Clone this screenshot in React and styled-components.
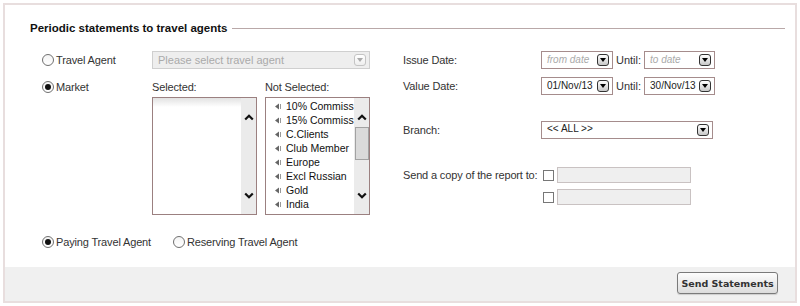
import React from 'react';
import styled, { createGlobalStyle, css } from 'styled-components';

const Global = createGlobalStyle`
  html, body { margin: 0; padding: 0; background: #fff; }
  body {
    font-family: "Liberation Sans", Arial, sans-serif;
    font-size: 11px;
    color: #333;
  }
  #root { padding: 3px; }
`;

const Panel = styled.section`
  box-sizing: border-box;
  width: 794px;
  height: 300px;
  border: 2px solid #e8dede;
  display: flex;
  flex-direction: column;
`;

const Header = styled.div`
  display: flex;
  align-items: center;
  gap: 5px;
  padding: 16px 10px 0 25px;
  height: 14px;
  line-height: 14px;
`;

const Title = styled.h2`
  margin: 0;
  font-size: 11.5px;
  font-weight: bold;
  color: #111;
  white-space: nowrap;
`;

const Rule = styled.div`
  flex: 1;
  height: 1px;
  background: #b9a8a8;
`;

const Main = styled.div`
  display: flex;
  gap: 33px;
  padding-left: 37px;
  margin-top: 16px;
`;

const LeftCol = styled.div`
  display: flex;
  flex-direction: column;
  width: 328px;
`;

const TopRow = styled.div`
  display: flex;
  align-items: center;
  height: 18px;
`;

const RadioCell = styled.div`
  width: 110px;
  flex-shrink: 0;
  align-self: ${(p) => (p.$top ? 'flex-start' : 'center')};
`;

const RadioLabel = styled.label`
  display: inline-flex;
  align-items: center;
  gap: 2px;
  line-height: 14px;
  color: #333;
  white-space: nowrap;
  letter-spacing: -0.15px;
`;

const RadioDot = styled.span`
  box-sizing: border-box;
  width: 12px;
  height: 12px;
  border-radius: 50%;
  border: 1px solid #707070;
  background: linear-gradient(#f4f4f4, #fff);
  display: inline-flex;
  align-items: center;
  justify-content: center;
  &::after {
    content: '';
    width: 6px;
    height: 6px;
    border-radius: 50%;
    background: ${(p) => (p.$checked ? '#111' : 'transparent')};
  }
`;

const SelectBox = styled.div`
  box-sizing: border-box;
  width: ${(p) => p.$w}px;
  height: 18px;
  display: flex;
  justify-content: space-between;
  align-items: ${(p) => (p.$topText ? 'flex-start' : 'center')};
  padding: 0 3px 0 5px;
  ${(p) =>
    p.$disabled
      ? css`
          border: 1px solid #cfcfcf;
          background: #eee;
          color: #aaa;
        `
      : css`
          border: 1px solid #a58c8c;
          background: #fff;
          color: #222;
        `}
`;

const SelectText = styled.span`
  font-size: ${(p) => (p.$small ? '10px' : '11px')};
  line-height: 14px;
  white-space: nowrap;
`;

const DropBtnWrap = styled.span`
  align-self: center;
  box-sizing: border-box;
  width: 12px;
  height: 12px;
  border-radius: 3px;
  border: 1px solid ${(p) => (p.$disabled ? '#c4c4c4' : '#333')};
  background: linear-gradient(#fff, ${(p) => (p.$disabled ? '#eee' : '#c8c8c8')});
  display: inline-flex;
  align-items: center;
  justify-content: center;
  flex-shrink: 0;
`;

const DropBtn = ({ disabled }) => (
  <DropBtnWrap $disabled={disabled}>
    <svg width="6" height="4" viewBox="0 0 6 4">
      <polygon points="0,0 6,0 3,4" fill={disabled ? '#aaa' : '#000'} />
    </svg>
  </DropBtnWrap>
);

const ListsRow = styled.div`
  display: flex;
  margin-top: 11px;
`;

const ListColumn = styled.div`
  width: 105px;
  display: flex;
  flex-direction: column;
  margin-right: ${(p) => (p.$gap ? '8px' : '0')};
`;

const ListLabel = styled.div`
  line-height: 14px;
  height: 14px;
  margin-bottom: 3px;
  color: #333;
  letter-spacing: -0.15px;
`;

const ListBox = styled.div`
  box-sizing: border-box;
  height: 118px;
  border: 1px solid #9b8080;
  display: flex;
`;

const Items = styled.ul`
  flex: 1;
  min-width: 0;
  margin: 0;
  padding: 1px 0 0 9px;
  list-style: none;
  overflow: hidden;
  background: ${(p) =>
    p.$shade ? 'linear-gradient(#e2e2e2 0px, #fff 9px, #fff 100%)' : '#fff'};
`;

const Item = styled.li`
  display: flex;
  align-items: center;
  gap: 4px;
  height: 14px;
  line-height: 14px;
  font-size: 10.5px;
  color: #111;
  white-space: nowrap;
  svg { flex-shrink: 0; }
`;

const ItemIcon = () => (
  <svg width="7" height="7" viewBox="0 0 7 7">
    <polygon points="0,3.5 4,0.5 4,6.5" fill="#666" />
    <rect x="5" y="1" width="1" height="5" fill="#999" />
  </svg>
);

const ScrollTrack = styled.div`
  width: 15px;
  flex-shrink: 0;
  background: #ebebeb;
  display: grid;
  grid-template-rows: 29px 1fr 29px;
`;

const ArrowCell = styled.div`
  display: flex;
  justify-content: center;
  align-items: ${(p) => (p.$down ? 'flex-start' : 'flex-end')};
  padding: ${(p) => (p.$down ? '7px 0 0' : '0 0 6px')};
`;

const Thumb = styled.div`
  box-sizing: border-box;
  height: 33px;
  margin-left: 1px;
  background: #dadada;
  border: 1px solid #a2a2a2;
`;

const Chevron = ({ down }) => (
  <svg width="10" height="7" viewBox="0 0 10 7">
    <polyline
      points={down ? '1.2,1.5 5,5.3 8.8,1.5' : '1.2,5.5 5,1.7 8.8,5.5'}
      fill="none"
      stroke="#111"
      strokeWidth="2.2"
    />
  </svg>
);

const BottomRadios = styled.div`
  display: flex;
  gap: 22px;
  margin-top: 20px;
`;

const RightCol = styled.div`
  display: flex;
  flex-direction: column;
`;

const FormRow = styled.div`
  display: flex;
  align-items: center;
  height: ${(p) => p.$h || 18}px;
  margin-top: ${(p) => p.$mt || 0}px;
`;

const FieldLabel = styled.span`
  width: ${(p) => p.$w || 138}px;
  flex-shrink: 0;
  white-space: nowrap;
  color: #333;
  line-height: 14px;
  letter-spacing: -0.15px;
`;

const Until = styled.span`
  margin: 0 3px;
  color: #333;
  line-height: 14px;
`;

const DateText = styled.span`
  font-size: 10px;
  line-height: 14px;
  color: ${(p) => (p.$ph ? '#aaa' : '#222')};
  font-style: ${(p) => (p.$ph ? 'italic' : 'normal')};
  white-space: nowrap;
`;

const CheckBox = styled.span`
  box-sizing: border-box;
  width: 11px;
  height: 11px;
  border: 1px solid #777;
  background: #fff;
  margin-right: 3px;
  flex-shrink: 0;
`;

const TextInput = styled.div`
  box-sizing: border-box;
  width: 134px;
  height: 16px;
  background: #efefef;
  border: 1px solid #c9c2c2;
`;

const Footer = styled.div`
  margin-top: auto;
  height: 34px;
  background: #f0f0f0;
  display: flex;
  justify-content: flex-end;
  align-items: flex-start;
  padding: 5px 17px 0 0;
  box-sizing: border-box;
`;

const Button = styled.button`
  box-sizing: border-box;
  width: 101px;
  height: 22px;
  padding: 0;
  border: 1px solid #7a7a7a;
  border-radius: 3px;
  background: linear-gradient(#fdfdfd, #dcdcdc);
  box-shadow: 0 1px 1px rgba(0, 0, 0, 0.15);
  font-family: "DejaVu Sans", Verdana, sans-serif;
  font-weight: bold;
  font-size: 9.5px;
  color: #333;
`;

const Radio = ({ checked, children }) => (
  <RadioLabel>
    <RadioDot $checked={checked} />
    {children}
  </RadioLabel>
);

const notSelected = [
  '10% Commiss',
  '15% Commiss',
  'C.Clients',
  'Club Member',
  'Europe',
  'Excl Russian',
  'Gold',
  'India',
];

const ListWithScroll = ({ items, shade, thumb }) => (
  <ListBox>
    <Items $shade={shade}>
      {items.map((t) => (
        <Item key={t}>
          <ItemIcon />
          {t}
        </Item>
      ))}
    </Items>
    <ScrollTrack>
      <ArrowCell>
        <Chevron />
      </ArrowCell>
      <div>{thumb && <Thumb />}</div>
      <ArrowCell $down>
        <Chevron down />
      </ArrowCell>
    </ScrollTrack>
  </ListBox>
);

export default function App() {
  return (
    <>
      <Global />
      <Panel>
        <Header>
          <Title>Periodic statements to travel agents</Title>
          <Rule />
        </Header>
        <Main>
          <LeftCol>
            <TopRow>
              <RadioCell>
                <Radio>Travel Agent</Radio>
              </RadioCell>
              <SelectBox $w={218} $disabled>
                <SelectText>Please select travel agent</SelectText>
                <DropBtn disabled />
              </SelectBox>
            </TopRow>
            <ListsRow>
              <RadioCell $top>
                <Radio checked>Market</Radio>
              </RadioCell>
              <ListColumn $gap>
                <ListLabel>Selected:</ListLabel>
                <ListWithScroll items={[]} shade />
              </ListColumn>
              <ListColumn>
                <ListLabel>Not Selected:</ListLabel>
                <ListWithScroll items={notSelected} thumb />
              </ListColumn>
            </ListsRow>
            <BottomRadios>
              <Radio checked>Paying Travel Agent</Radio>
              <Radio>Reserving Travel Agent</Radio>
            </BottomRadios>
          </LeftCol>
          <RightCol>
            <FormRow>
              <FieldLabel>Issue Date:</FieldLabel>
              <SelectBox $w={72}>
                <DateText $ph>from date</DateText>
                <DropBtn />
              </SelectBox>
              <Until>Until:</Until>
              <SelectBox $w={71}>
                <DateText $ph>to date</DateText>
                <DropBtn />
              </SelectBox>
            </FormRow>
            <FormRow $mt={8}>
              <FieldLabel>Value Date:</FieldLabel>
              <SelectBox $w={72}>
                <DateText>01/Nov/13</DateText>
                <DropBtn />
              </SelectBox>
              <Until>Until:</Until>
              <SelectBox $w={71}>
                <DateText>30/Nov/13</DateText>
                <DropBtn />
              </SelectBox>
            </FormRow>
            <FormRow $mt={26}>
              <FieldLabel>Branch:</FieldLabel>
              <SelectBox $w={172} $topText>
                <SelectText $small>&lt;&lt; ALL &gt;&gt;</SelectText>
                <DropBtn />
              </SelectBox>
            </FormRow>
            <FormRow $mt={28} $h={16}>
              <FieldLabel $w={140}>Send a copy of the report to:</FieldLabel>
              <CheckBox />
              <TextInput />
            </FormRow>
            <FormRow $mt={6} $h={16}>
              <FieldLabel $w={140} />
              <CheckBox />
              <TextInput />
            </FormRow>
          </RightCol>
        </Main>
        <Footer>
          <Button type="button">Send Statements</Button>
        </Footer>
      </Panel>
    </>
  );
}
